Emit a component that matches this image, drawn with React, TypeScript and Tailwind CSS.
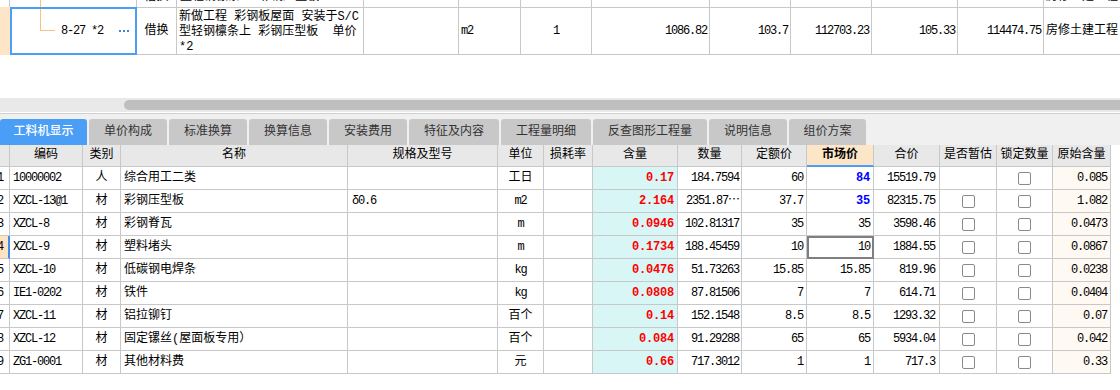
import React from "react";

const FONT = "font-['Liberation_Mono','Noto_Sans_CJK_SC',monospace]";
const MONO = "text-[12px] tracking-[-1.2px]";
const BC = "border-[#c8c8c8]";
const COLS =
  "grid grid-cols-[10px_73px_38px_227px_150px_46px_49px_85px_64px_65px_67px_66px_57px_56px_58px]";
const TOPCOLS =
  "grid grid-cols-[10px_127px_40px_187px_95px_62px_71px_118px_81px_81px_86px_86px_76px]";

type R = {
  code: string;
  type: string;
  name: string;
  spec: string;
  unit: string;
  q: string;
  amt: string;
  dp: string;
  mp: string;
  blue?: boolean;
  tot: string;
  est: boolean;
  orig: string;
};

const rows: R[] = [
  { code: "10000002", type: "人", name: "综合用工二类", spec: "", unit: "工日", q: "0.17", amt: "184.7594", dp: "60", mp: "84", blue: true, tot: "15519.79", est: false, orig: "0.085" },
  { code: "XZCL-13@1", type: "材", name: "彩钢压型板", spec: "δ0.6", unit: "m2", q: "2.164", amt: "2351.87", dp: "37.7", mp: "35", blue: true, tot: "82315.75", est: true, orig: "1.082" },
  { code: "XZCL-8", type: "材", name: "彩钢脊瓦", spec: "", unit: "m", q: "0.0946", amt: "102.81317", dp: "35", mp: "35", tot: "3598.46", est: true, orig: "0.0473" },
  { code: "XZCL-9", type: "材", name: "塑料堵头", spec: "", unit: "m", q: "0.1734", amt: "188.45459", dp: "10", mp: "10", tot: "1884.55", est: true, orig: "0.0867" },
  { code: "XZCL-10", type: "材", name: "低碳钢电焊条", spec: "", unit: "kg", q: "0.0476", amt: "51.73263", dp: "15.85", mp: "15.85", tot: "819.96", est: true, orig: "0.0238" },
  { code: "IE1-0202", type: "材", name: "铁件", spec: "", unit: "kg", q: "0.0808", amt: "87.81506", dp: "7", mp: "7", tot: "614.71", est: true, orig: "0.0404" },
  { code: "XZCL-11", type: "材", name: "铝拉铆钉", spec: "", unit: "百个", q: "0.14", amt: "152.1548", dp: "8.5", mp: "8.5", tot: "1293.32", est: true, orig: "0.07" },
  { code: "XZCL-12", type: "材", name: "固定镙丝(屋面板专用）", spec: "", unit: "百个", q: "0.084", amt: "91.29288", dp: "65", mp: "65", tot: "5934.04", est: true, orig: "0.042" },
  { code: "ZG1-0001", type: "材", name: "其他材料费", spec: "", unit: "元", q: "0.66", amt: "717.3012", dp: "1", mp: "1", tot: "717.3", est: true, orig: "0.33" },
];

const tabs: { t: string; w: string }[] = [
  { t: "工料机显示", w: "w-[87px]" },
  { t: "单价构成", w: "w-[78px]" },
  { t: "标准换算", w: "w-[78px]" },
  { t: "换算信息", w: "w-[78px]" },
  { t: "安装费用", w: "w-[78px]" },
  { t: "特征及内容", w: "w-[90px]" },
  { t: "工程量明细", w: "w-[90px]" },
  { t: "反查图形工程量", w: "w-[114px]" },
  { t: "说明信息", w: "w-[78px]" },
  { t: "组价方案", w: "w-[77px]" },
];

const headers = ["编码", "类别", "名称", "规格及型号", "单位", "损耗率", "含量", "数量", "定额价", "市场价", "合价", "是否暂估", "锁定数量", "原始含量"];

const cell = `border-r border-b ${BC} flex items-center overflow-hidden whitespace-nowrap`;

function Check() {
  return <span className="block w-[13px] h-[13px] border border-[#8a8a8a] rounded-[2px] bg-white" />;
}

function DataRow({ r, i }: { r: R; i: number }) {
  const sel = i === 3;
  const latinUnit = /^[a-z0-9]+$/.test(r.unit);
  return (
    <div className={`${COLS} h-[23px]`}>
      <div
        className={
          sel
            ? `border-b ${BC} border-r-2 border-r-[#3d8ef0] bg-[#fde3c1] flex items-center justify-end pr-[5px] overflow-hidden`
            : `${cell} justify-end pr-[6px]`
        }
      >
        <span className={`${MONO} shrink-0`}>{i + 1}</span>
      </div>
      <div className={`${cell} pl-[3px] ${MONO}`}>{r.code}</div>
      <div className={`${cell} justify-center`}>{r.type}</div>
      <div className={`${cell} pl-[3px]`}>{r.name}</div>
      <div className={`${cell} pl-[4px] ${MONO}`}>{r.spec}</div>
      <div className={`${cell} justify-center ${latinUnit ? MONO : ""}`}>{r.unit}</div>
      <div className={`${cell}`} />
      <div className={`${cell} justify-end pr-[3px] bg-[#d8f6f6] text-[12px] font-bold tracking-[-0.2px] text-[#ff0000]`}>{r.q}</div>
      <div className={`${cell} justify-end pr-[2px]`}>
        <span className={MONO}>{r.amt}</span>
        {i === 1 ? <span className="text-[12px] tracking-[-1px]">⋯</span> : null}
      </div>
      <div className={`${cell} justify-end pr-[3px] ${MONO}`}>{r.dp}</div>
      <div
        className={`${cell} justify-end pr-[3px] ${
          r.blue ? "text-[12px] font-bold tracking-[-0.2px] text-[#0000ff]" : MONO
        } ${sel ? "outline-2 outline-[#7f7f7f] -outline-offset-2" : ""}`}
      >
        {r.mp}
      </div>
      <div className={`${cell} justify-end pr-[4px] ${MONO}`}>{r.tot}</div>
      <div className={`${cell} justify-center`}>{r.est ? <Check /> : null}</div>
      <div className={`${cell} justify-center`}>
        <Check />
      </div>
      <div className={`${cell} justify-end pr-[3px] bg-[#fef9f2] ${MONO}`}>{r.orig}</div>
    </div>
  );
}

export default function App() {
  const tc = `border-t border-b border-r ${BC} flex items-center overflow-hidden whitespace-nowrap`;
  return (
    <div className={`w-[1120px] h-[390px] bg-white overflow-hidden text-[12px] text-black leading-[15px] ${FONT}`}>
      {/* previous row (clipped) */}
      <div className="h-[7px] overflow-hidden flex flex-col justify-end">
        <div className={`${TOPCOLS} h-[40px] shrink-0`}>
          <div className={`border-r ${BC}`} />
          <div className={`border-r ${BC} relative`}>
            <span className="absolute left-[30px] top-0 bottom-0 w-px bg-[#f6c27c]" />
          </div>
          <div className={`border-r ${BC} flex items-end justify-center pb-[2px]`}>借换</div>
          <div className={`border-r ${BC} flex items-end pl-[3px] pb-[2px] whitespace-pre overflow-hidden`}>型轻钢檩条上 彩钢压型板</div>
          <div className={`border-r ${BC}`} />
          <div className={`border-r ${BC}`} />
          <div className={`border-r ${BC}`} />
          <div className={`border-r ${BC}`} />
          <div className={`border-r ${BC}`} />
          <div className={`border-r ${BC}`} />
          <div className={`border-r ${BC}`} />
          <div className={`border-r ${BC}`} />
          <div className="flex items-end pl-[2px] pb-[2px] whitespace-nowrap overflow-hidden">房修土建工程</div>
        </div>
      </div>

      {/* current top row */}
      <div className={`${TOPCOLS} h-[48px]`}>
        <div className="bg-[#fde5c6]" />
        <div className="border-2 border-[#4a9ff5] relative flex items-center">
          <span className="absolute left-[28px] top-0 h-[21px] w-px bg-[#f6c27c]" />
          <span className="absolute left-[28px] top-[21px] h-px w-[15px] bg-[#f6c27c]" />
          <span className={`ml-[49px] ${MONO} whitespace-pre`}>8-27 *2</span>
          <span className="ml-auto mr-[6px] flex gap-[2px]">
            <span className="w-[2px] h-[2px] bg-[#3a86d8]" />
            <span className="w-[2px] h-[2px] bg-[#3a86d8]" />
            <span className="w-[2px] h-[2px] bg-[#3a86d8]" />
          </span>
        </div>
        <div className={`${tc} justify-center`}>借换</div>
        <div className={`border-t border-b border-r ${BC} pl-[2px] pt-[2px] whitespace-pre leading-[15px] overflow-hidden`}>
          {"新做工程 彩钢板屋面 安装于S/C\n型轻钢檩条上 彩钢压型板  单价\n*2"}
        </div>
        <div className={tc} />
        <div className={`${tc} pl-[2px] ${MONO}`}>m2</div>
        <div className={`${tc} justify-center ${MONO}`}>1</div>
        <div className={`${tc} justify-end pr-[2px] ${MONO}`}>1086.82</div>
        <div className={`${tc} justify-end pr-[2px] ${MONO}`}>103.7</div>
        <div className={`${tc} justify-end pr-[2px] ${MONO}`}>112703.23</div>
        <div className={`${tc} justify-end pr-[2px] ${MONO}`}>105.33</div>
        <div className={`${tc} justify-end pr-[2px] ${MONO}`}>114474.75</div>
        <div className={`border-t border-b ${BC} flex items-center pl-[2px] whitespace-nowrap overflow-hidden`}>房修土建工程</div>
      </div>

      {/* empty area */}
      <div className="h-[43px]" />

      {/* horizontal scrollbar */}
      <div className="h-[14px] bg-[#e9e9e9] pt-[2px] pl-[124px]">
        <div className="h-[10px] bg-[#bfbfbf] rounded-l-full" />
      </div>
      <div className="h-px bg-white" />
      <div className="h-px bg-[#cfcfcf]" />

      {/* tabs */}
      <div className="h-[31px] bg-[#f0f0f0] flex items-end gap-[2px]">
        {tabs.map((t, i) => (
          <div
            key={t.t}
            className={`${t.w} h-[26px] rounded-t-[3px] flex items-center justify-center text-[12px] ${
              i === 0 ? "bg-[#4b9ef6] text-white font-medium" : "bg-[#c8c8c8] text-[#333]"
            }`}
          >
            {t.t}
          </div>
        ))}
      </div>

      {/* lower table */}
      <div className="w-[1111px]">
        <div className={`${COLS} h-[22px]`}>
          <div className={`${cell} bg-[#e8e8e8]`} />
          {headers.map((h) => (
            <div
              key={h}
              className={
                h === "市场价"
                  ? `border-r ${BC} border-b-2 border-b-[#4a9ff5] bg-[#fde6c7] flex items-center justify-center font-bold whitespace-nowrap overflow-hidden`
                  : `${cell} justify-center bg-[#e8e8e8]`
              }
            >
              {h}
            </div>
          ))}
        </div>
        {rows.map((r, i) => (
          <DataRow key={r.code} r={r} i={i} />
        ))}
      </div>
    </div>
  );
}
